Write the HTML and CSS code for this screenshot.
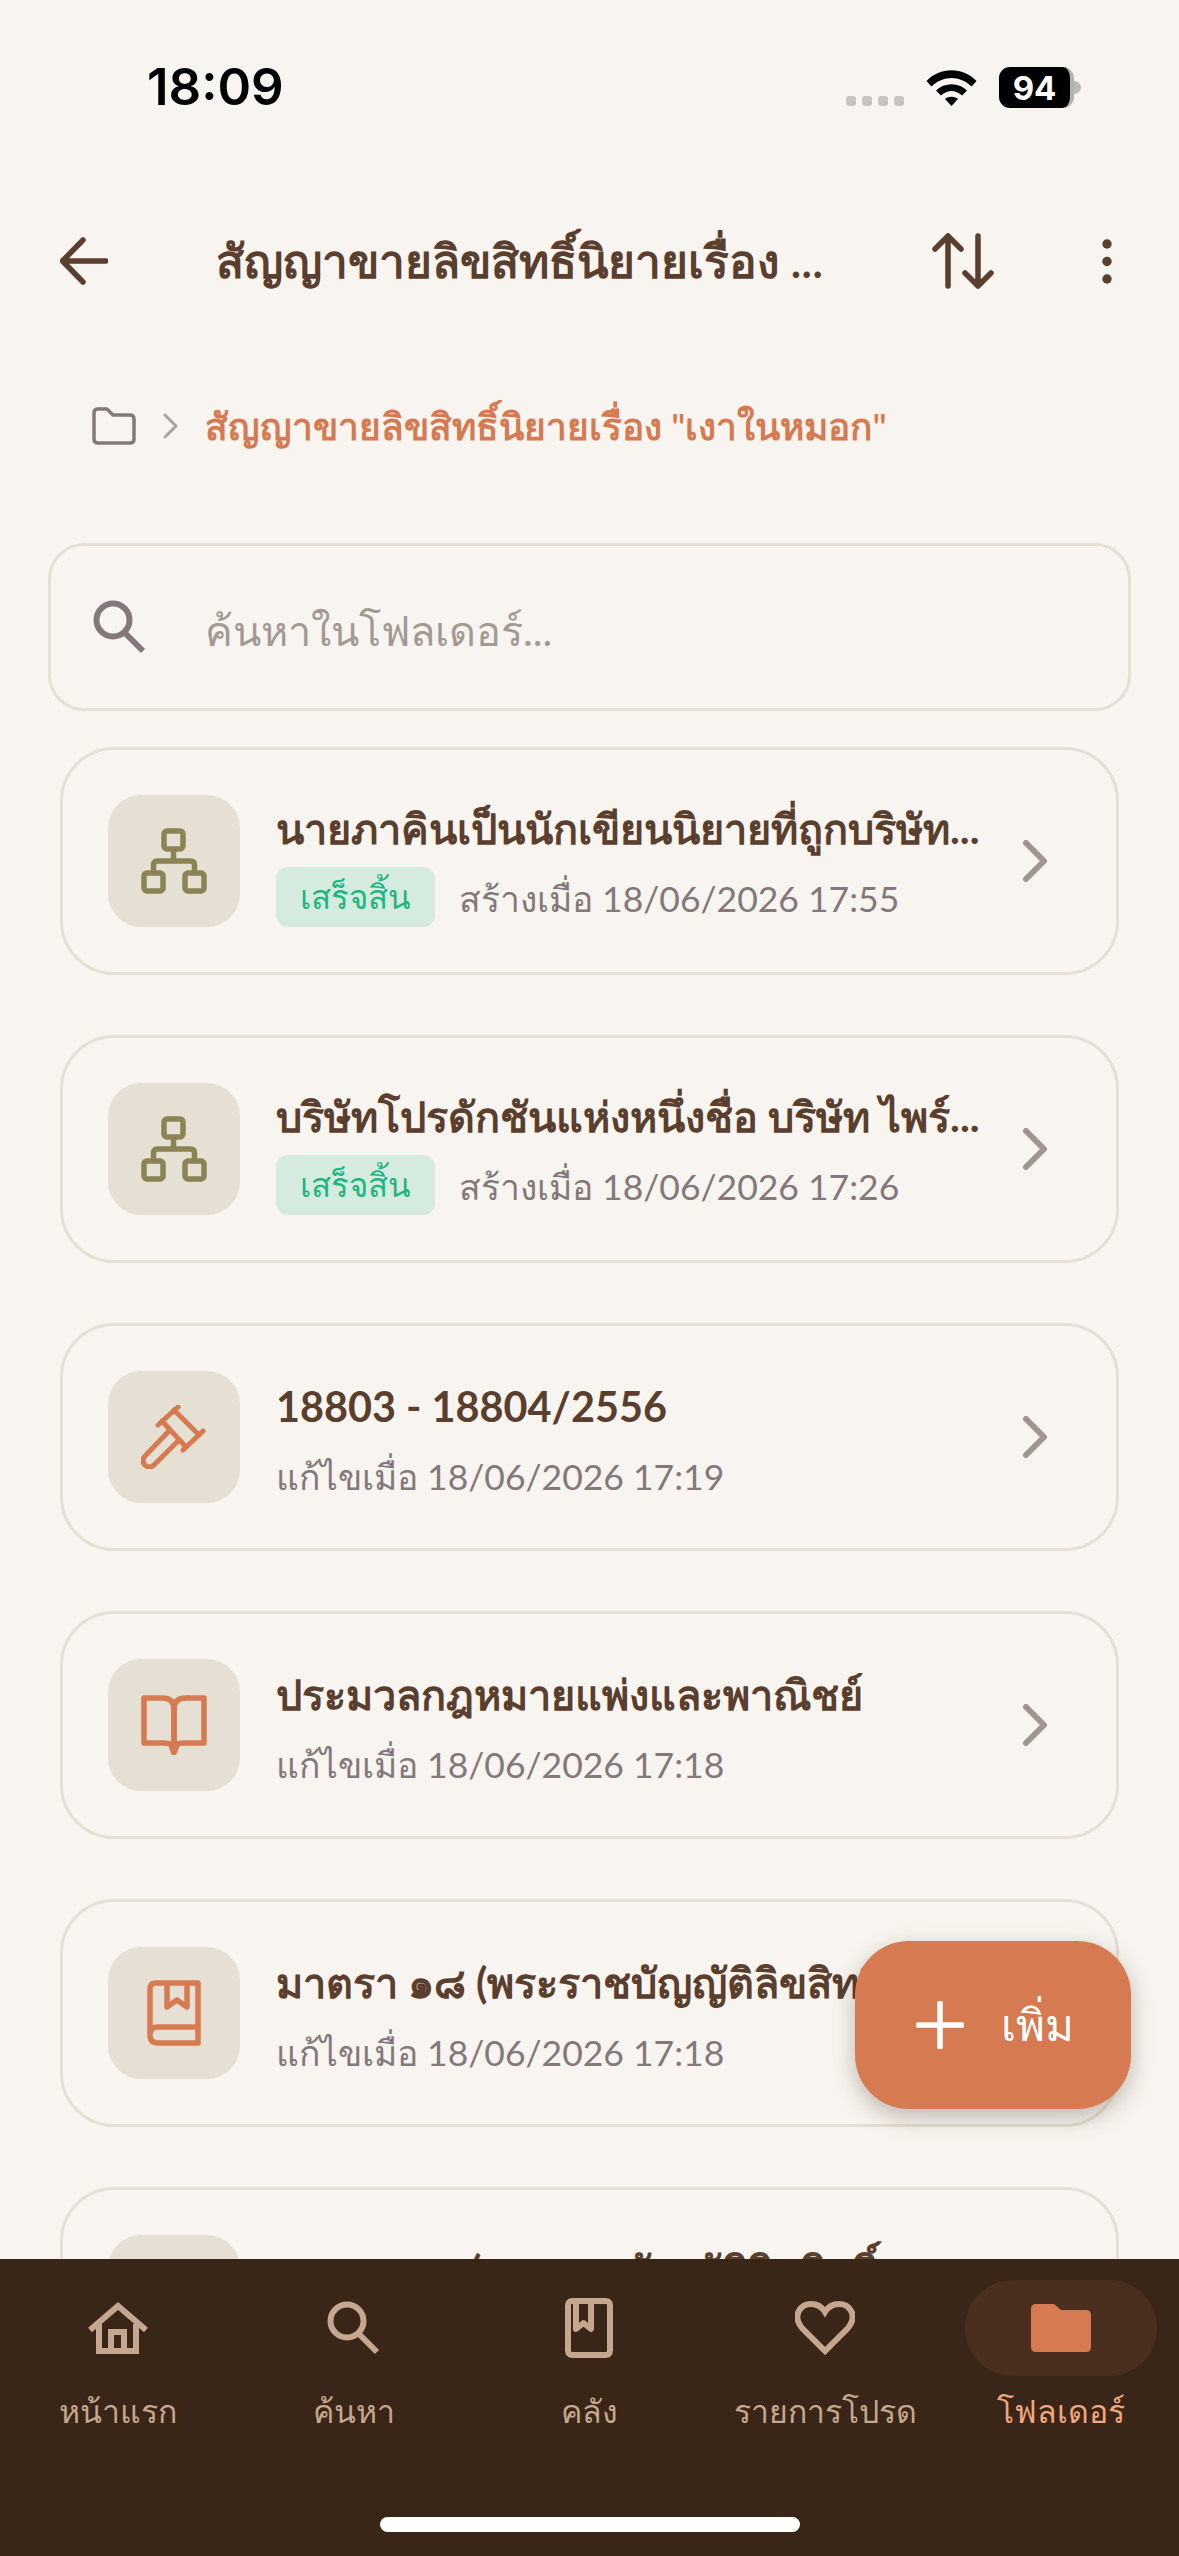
FILE: index.html
```html
<!DOCTYPE html>
<html lang="th">
<head>
<meta charset="UTF-8">
<meta name="viewport" content="width=device-width, initial-scale=1.0">
<title>โฟลเดอร์</title>
<link rel="stylesheet" href="styles.css">
</head>
<body>
<div class="screen">

    <!-- status bar -->
    <div class="status-bar">
        <span class="clock">18:09</span>
        <div class="status-icons">
            <div class="signal"><i></i><i></i><i></i><i></i></div>
            <svg class="wifi" width="51" height="37" viewBox="0 0 51 37">
                <path d="M0.5 12 C14 -2.5 37 -2.5 50.5 12 L45.5 17.5 C34 6 17 6 5.5 17.5 Z"/>
                <path d="M10 21.5 C18.5 13 32.5 13 41 21.5 L36 26.5 C29.5 20.5 21.5 20.5 15 26.5 Z"/>
                <path d="M19 30 C22.5 27 28.5 27 32 30 L25.5 37 Z"/>
            </svg>
            <div class="battery"><span class="battery-num">94</span></div>
            <div class="battery-nub"></div>
        </div>
    </div>

    <!-- header -->
    <div class="top-bar">
        <svg class="back" width="48" height="48" viewBox="0 0 48 48" fill="none" stroke="#5a3e2e" stroke-width="5.5" stroke-linecap="round" stroke-linejoin="round">
            <path d="M46 24 H3 M23 3 L2.5 24 L23 45"/>
        </svg>
        <div class="page-title">สัญญาขายลิขสิทธิ์นิยายเรื่อง ...</div>
        <svg class="sort" width="62" height="56" viewBox="0 0 62 56" fill="none" stroke="#5a3e2e" stroke-width="5.5" stroke-linecap="round" stroke-linejoin="round">
            <path d="M16 53 V3 M3 16 L16 3 L29 16"/>
            <path d="M46 3 V53 M33 40 L46 53 L59 40"/>
        </svg>
        <svg class="kebab" width="10" height="45" viewBox="0 0 10 45" fill="#5a3e2e">
            <circle cx="5" cy="5" r="4.7"/><circle cx="5" cy="22.5" r="4.7"/><circle cx="5" cy="40" r="4.7"/>
        </svg>
    </div>

    <!-- breadcrumb -->
    <div class="breadcrumb">
        <svg class="crumb-folder" width="44" height="38" viewBox="0 0 44 38" fill="none" stroke="#85787a" stroke-width="3.5" stroke-linejoin="round">
            <path d="M2 6 Q2 2 6 2 H15 L21 8 H38 Q42 8 42 12 V32 Q42 36 38 36 H6 Q2 36 2 32 Z"/>
        </svg>
        <svg class="crumb-sep" width="16" height="26" viewBox="0 0 16 26" fill="none" stroke="#aba39e" stroke-width="3" stroke-linecap="round" stroke-linejoin="round">
            <path d="M3 2 L14 13 L3 24"/>
        </svg>
        <span class="crumb-text">สัญญาขายลิขสิทธิ์นิยายเรื่อง "เงาในหมอก"</span>
    </div>

    <!-- search -->
    <div class="search-box">
        <svg width="54" height="54" viewBox="0 0 54 54" fill="none" stroke="#85787a" stroke-width="6">
            <circle cx="20" cy="20" r="16.5"/>
            <path d="M31 32 L50 51"/>
        </svg>
        <span class="search-placeholder">ค้นหาในโฟลเดอร์...</span>
    </div>

    <!-- list -->
    <div class="list">
        <div class="card">
            <div class="card-icon">
                <svg width="66" height="66" viewBox="0 0 66 66" fill="none" stroke="#8a8455" stroke-width="5.5" stroke-linejoin="round">
                    <rect x="23" y="3" width="19" height="18" rx="3"/>
                    <rect x="3" y="45" width="19" height="18" rx="3"/>
                    <rect x="44" y="45" width="19" height="18" rx="3"/>
                    <path d="M32.5 21 V33 M12.5 45 V37 Q12.5 33 16.5 33 H49.5 Q53.5 33 53.5 37 V45"/>
                </svg>
            </div>
            <div class="card-body">
                <div class="card-title">นายภาคินเป็นนักเขียนนิยายที่ถูกบริษัท...</div>
                <div class="card-meta"><span class="badge">เสร็จสิ้น</span><span class="meta-text">สร้างเมื่อ 18/06/2026 17:55</span></div>
            </div>
            <svg class="chevron" width="26" height="42" viewBox="0 0 26 42" fill="none" stroke="#a0958f" stroke-width="6" stroke-linecap="round" stroke-linejoin="round"><path d="M4 3 L22 21 L4 39"/></svg>
        </div>

        <div class="card">
            <div class="card-icon">
                <svg width="66" height="66" viewBox="0 0 66 66" fill="none" stroke="#8a8455" stroke-width="5.5" stroke-linejoin="round">
                    <rect x="23" y="3" width="19" height="18" rx="3"/>
                    <rect x="3" y="45" width="19" height="18" rx="3"/>
                    <rect x="44" y="45" width="19" height="18" rx="3"/>
                    <path d="M32.5 21 V33 M12.5 45 V37 Q12.5 33 16.5 33 H49.5 Q53.5 33 53.5 37 V45"/>
                </svg>
            </div>
            <div class="card-body">
                <div class="card-title">บริษัทโปรดักชันแห่งหนึ่งชื่อ บริษัท ไพร์...</div>
                <div class="card-meta"><span class="badge">เสร็จสิ้น</span><span class="meta-text">สร้างเมื่อ 18/06/2026 17:26</span></div>
            </div>
            <svg class="chevron" width="26" height="42" viewBox="0 0 26 42" fill="none" stroke="#a0958f" stroke-width="6" stroke-linecap="round" stroke-linejoin="round"><path d="M4 3 L22 21 L4 39"/></svg>
        </div>

        <div class="card">
            <div class="card-icon">
                <svg width="66" height="64" viewBox="0 0 66 64" fill="none" stroke="#d67a52" stroke-width="5" stroke-linejoin="round" stroke-linecap="round">
                    <path d="M17 20 L37 2 M42 45 L62 26"/>
                    <path d="M21 16 L45 42 M33 5 L58 30"/>
                    <path d="M27 27 L4 51 Q0 56 4 60 Q8 64 13 60 L37 36"/>
                </svg>
            </div>
            <div class="card-body plain">
                <div class="card-title">18803 - 18804/2556</div>
                <div class="card-meta"><span class="meta-text">แก้ไขเมื่อ 18/06/2026 17:19</span></div>
            </div>
            <svg class="chevron" width="26" height="42" viewBox="0 0 26 42" fill="none" stroke="#a0958f" stroke-width="6" stroke-linecap="round" stroke-linejoin="round"><path d="M4 3 L22 21 L4 39"/></svg>
        </div>

        <div class="card">
            <div class="card-icon">
                <svg width="66" height="60" viewBox="0 0 66 60" fill="none" stroke="#d67a52" stroke-width="5.5" stroke-linejoin="round">
                    <path d="M3 3 H21 Q33 3 33 14 V52 Q33 48 22 48 H3 Z"/>
                    <path d="M63 3 H45 Q33 3 33 14 V52 Q33 48 44 48 H63 Z"/>
                    <path d="M30 50 L33 58 L36 50 Z" fill="#d67a52"/>
                </svg>
            </div>
            <div class="card-body plain">
                <div class="card-title">ประมวลกฎหมายแพ่งและพาณิชย์</div>
                <div class="card-meta"><span class="meta-text">แก้ไขเมื่อ 18/06/2026 17:18</span></div>
            </div>
            <svg class="chevron" width="26" height="42" viewBox="0 0 26 42" fill="none" stroke="#a0958f" stroke-width="6" stroke-linecap="round" stroke-linejoin="round"><path d="M4 3 L22 21 L4 39"/></svg>
        </div>

        <div class="card">
            <div class="card-icon">
                <svg width="54" height="66" viewBox="0 0 54 66" fill="none" stroke="#d67a52" stroke-width="5.5" stroke-linejoin="round">
                    <path d="M3 55 V9 Q3 3 9 3 H51 V63 H11 Q3 63 3 55 Q3 47 11 47 H51"/>
                    <path d="M20 3 V27 L30 20 L40 27 V3"/>
                </svg>
            </div>
            <div class="card-body plain">
                <div class="card-title">มาตรา ๑๘ (พระราชบัญญัติลิขสิทธิ์...</div>
                <div class="card-meta"><span class="meta-text">แก้ไขเมื่อ 18/06/2026 17:18</span></div>
            </div>
            <svg class="chevron" width="26" height="42" viewBox="0 0 26 42" fill="none" stroke="#a0958f" stroke-width="6" stroke-linecap="round" stroke-linejoin="round"><path d="M4 3 L22 21 L4 39"/></svg>
        </div>

        <div class="card">
            <div class="card-icon"></div>
            <div class="card-body plain">
                <div class="card-title">มาตรา ๒๐ (พระราชบัญญัติลิขสิทธิ์...</div>
                <div class="card-meta"><span class="meta-text">แก้ไขเมื่อ 18/06/2026 17:18</span></div>
            </div>
        </div>
    </div>

    <!-- add button -->
    <div class="fab">
        <svg width="48" height="48" viewBox="0 0 48 48" fill="none" stroke="#fff" stroke-width="5.5" stroke-linecap="round"><path d="M24 2 V46 M2 24 H46"/></svg>
        <span class="fab-text">เพิ่ม</span>
    </div>

    <!-- bottom nav -->
    <div class="bottom-nav">
        <div class="nav-item">
            <div class="nav-icon">
                <svg width="60" height="52" viewBox="0 0 60 52" fill="none" stroke="#c4a78e" stroke-width="6">
                    <path d="M2 28 L30 4 L58 28"/>
                    <path d="M11 22 V49 H48 V22"/>
                    <path d="M23 49 V30 H36 V49"/>
                </svg>
            </div>
            <span class="nav-label">หน้าแรก</span>
        </div>
        <div class="nav-item">
            <div class="nav-icon">
                <svg width="54" height="54" viewBox="0 0 54 54" fill="none" stroke="#c4a78e" stroke-width="6">
                    <circle cx="20" cy="20" r="16.5"/>
                    <path d="M31 32 L50 51"/>
                </svg>
            </div>
            <span class="nav-label">ค้นหา</span>
        </div>
        <div class="nav-item">
            <div class="nav-icon">
                <svg width="48" height="60" viewBox="0 0 48 60" fill="none" stroke="#c4a78e" stroke-width="6" stroke-linejoin="round">
                    <rect x="3" y="3" width="42" height="54" rx="4"/>
                    <path d="M11 3 V31 L18.5 25 L26 31 V3"/>
                </svg>
            </div>
            <span class="nav-label">คลัง</span>
        </div>
        <div class="nav-item">
            <div class="nav-icon">
                <svg width="60" height="54" viewBox="0 0 60 54" fill="none" stroke="#c4a78e" stroke-width="6">
                    <path d="M30 50 L7 27 C-4 13 7 3 16 3 C22 3 27 6 30 11 C33 6 38 3 44 3 C53 3 64 13 53 27 Z"/>
                </svg>
            </div>
            <span class="nav-label">รายการโปรด</span>
        </div>
        <div class="nav-item active">
            <div class="nav-icon">
                <svg width="60" height="48" viewBox="0 0 60 48" fill="#d67a52">
                    <path d="M0 5 Q0 0 5 0 H23 L30 6 H55 Q60 6 60 11 V43 Q60 48 55 48 H5 Q0 48 0 43 Z"/>
                </svg>
            </div>
            <span class="nav-label">โฟลเดอร์</span>
        </div>
        <div class="home-indicator"></div>
    </div>

</div>
</body>
</html>
```

FILE: styles.css
```css
* {
    box-sizing: border-box;
}
body {
    margin: 0;
    background: #f8f5f0;
    font-family: Lato, "Noto Sans", sans-serif;
}
.screen {
    position: relative;
    width: 1179px;
    height: 2556px;
    overflow: hidden;
    display: flex;
    flex-direction: column;
    background: #f8f5f0;
}
.status-bar {
    height: 174px;
    flex-shrink: 0;
    display: flex;
    justify-content: space-between;
    padding: 60px 98px 0 147px;
}
.clock {
    font-family: Inter, sans-serif;
    font-size: 51px;
    font-weight: 600;
    line-height: 54px;
    color: #000;
}
.status-icons {
    display: flex;
    align-items: flex-start;
    padding-top: 7px;
}
.signal {
    display: flex;
    gap: 6px;
    margin-top: 29px;
    margin-right: 22px;
}
.signal i {
    display: block;
    width: 10px;
    height: 10px;
    border-radius: 3px;
    background: #c6c4c0;
}
.wifi {
    fill: #000;
    margin-top: 2px;
    margin-right: 22px;
}
.battery {
    width: 75px;
    height: 41px;
    background: #000;
    border-radius: 11px;
    border-right: 4px solid #b5b3b0;
    display: flex;
    align-items: center;
    justify-content: center;
}
.battery-num {
    font-family: Inter, sans-serif;
    font-size: 33px;
    font-weight: 700;
    color: #fff;
}
.battery-nub {
    width: 7px;
    height: 13px;
    margin-top: 14px;
    background: #bdbbb8;
    border-radius: 0 7px 7px 0;
}
.top-bar {
    height: 174px;
    flex-shrink: 0;
    display: flex;
    align-items: center;
    padding: 0 67px 0 60px;
}
.page-title {
    flex: 1;
    padding-left: 108px;
    font-size: 46px;
    font-weight: 600;
    color: #5a3e2e;
    white-space: nowrap;
}
.sort {
    margin-right: 108px;
}
.breadcrumb {
    display: flex;
    align-items: center;
    height: 82px;
    margin-top: 37px;
    margin-bottom: 2px;
    padding-left: 92px;
    flex-shrink: 0;
}
.crumb-sep {
    margin-left: 26px;
}
.crumb-text {
    margin-left: 27px;
    font-size: 37px;
    font-weight: 600;
    color: #d67a52;
    white-space: nowrap;
}
.search-box {
    flex-shrink: 0;
    display: flex;
    align-items: center;
    gap: 58px;
    height: 168px;
    margin: 74px 48px 36px 48px;
    padding-left: 42px;
    border: 3px solid #e6dfd3;
    border-radius: 36px;
}
.search-placeholder {
    font-size: 41.5px;
    line-height: 54px;
    padding-top: 5px;
    color: #a39a94;
}
.list {
    flex: 1;
    min-height: 0;
    overflow: hidden;
    padding: 0 60px;
    display: flex;
    flex-direction: column;
    gap: 60px;
}
.card {
    flex-shrink: 0;
    height: 228px;
    display: flex;
    align-items: center;
    padding: 0 68px 0 45px;
    border: 3px solid #e6dfd3;
    border-radius: 54px;
}
.card-icon {
    flex-shrink: 0;
    width: 132px;
    height: 132px;
    border-radius: 33px;
    background: #e6dfd3;
    display: flex;
    align-items: center;
    justify-content: center;
}
.card-body {
    flex: 1;
    min-width: 0;
    margin: 0 24px 0 36px;
    padding-top: 4px;
    display: flex;
    flex-direction: column;
    gap: 10px;
}
.card-body.plain {
    padding-top: 8px;
}
.card-title {
    font-size: 41.4px;
    line-height: 58px;
    font-weight: 700;
    color: #5a3e2e;
    white-space: nowrap;
}
.card-meta {
    display: flex;
    align-items: center;
    gap: 24px;
    height: 60px;
}
.badge {
    width: 159px;
    height: 60px;
    border-radius: 12px;
    background: #d6ebdf;
    color: #1db77f;
    font-size: 33px;
    line-height: 58px;
    text-align: center;
}
.meta-text {
    font-size: 35.5px;
    line-height: 60px;
    padding-top: 3px;
    color: #85787a;
    white-space: nowrap;
}
.fab {
    position: absolute;
    left: 855px;
    top: 1941px;
    width: 276px;
    height: 168px;
    border-radius: 54px;
    background: #d67a52;
    box-shadow: 0 8px 24px rgba(58, 38, 24, 0.3);
    display: flex;
    align-items: center;
    padding-left: 61px;
    gap: 37px;
}
.fab-text {
    font-size: 44px;
    color: #fff;
}
.bottom-nav {
    position: relative;
    flex-shrink: 0;
    height: 297px;
    background: #3a2618;
    display: flex;
    align-items: flex-start;
}
.nav-item {
    flex: 1;
    display: flex;
    flex-direction: column;
    align-items: center;
    padding-top: 21px;
}
.nav-icon {
    width: 192px;
    height: 96px;
    border-radius: 48px;
    display: flex;
    align-items: center;
    justify-content: center;
}
.nav-label {
    margin-top: 12px;
    font-size: 32px;
    line-height: 46px;
    color: #c4a78e;
    white-space: nowrap;
}
.active .nav-icon {
    background: #4a2e20;
}
.active .nav-label {
    color: #f2a67e;
}
.home-indicator {
    position: absolute;
    left: 380px;
    bottom: 24px;
    width: 420px;
    height: 15px;
    border-radius: 8px;
    background: #fff;
}
```
